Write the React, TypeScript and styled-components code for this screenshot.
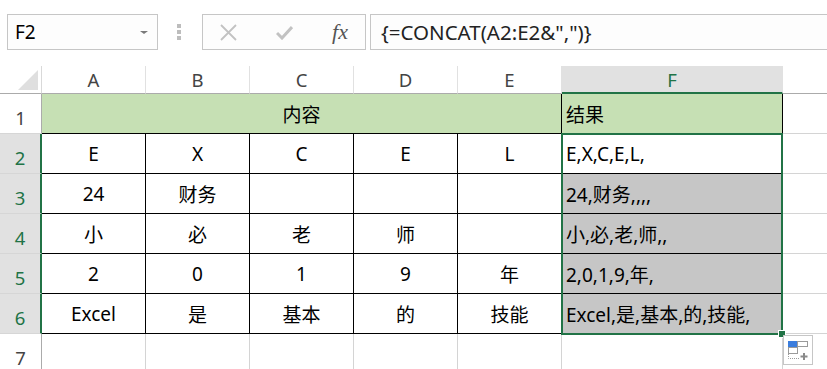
import { Fragment } from 'react';
import styled, { createGlobalStyle } from 'styled-components';

const GlobalStyle = createGlobalStyle`
  html, body {
    margin: 0;
    background: #ffffff;
    font-family: "Noto Sans", "Noto Sans CJK SC", sans-serif;
  }
`;

const green = '#217346';

const Page = styled.div`
  width: 827px;
  height: 369px;
  overflow: hidden;
  background: #ffffff;
`;

const FormulaBar = styled.div`
  display: flex;
  align-items: center;
  height: 36px;
  padding: 14px 0 16px 7px;
`;

const NameBox = styled.div`
  display: flex;
  align-items: center;
  justify-content: space-between;
  box-sizing: border-box;
  width: 151px;
  height: 36px;
  padding: 0 9px 0 7px;
  border: 1px solid #c6c6c6;
  background: #fdfdfd;
  font-size: 19px;
  color: #000;
`;

const DropArrow = styled.span`
  width: 0;
  height: 0;
  border-left: 4px solid transparent;
  border-right: 4px solid transparent;
  border-top: 3px solid #7a7a7a;
`;

const Grip = styled.div`
  display: flex;
  flex-direction: column;
  gap: 2px;
  margin: 0 21px 0 19px;
`;

const Dot = styled.span`
  width: 4px;
  height: 4px;
  background: #bdbdbd;
`;

const FnBox = styled.div`
  display: flex;
  align-items: center;
  justify-content: space-between;
  box-sizing: border-box;
  width: 164px;
  height: 36px;
  padding: 0 17px;
  border: 1px solid #c6c6c6;
  background: #fdfdfd;
`;

const FnIcon = styled.span`
  font-family: "Liberation Serif", serif;
  font-style: italic;
  font-size: 22px;
  color: #555;
`;

const FormulaInput = styled.div`
  display: flex;
  align-items: center;
  box-sizing: border-box;
  flex: 1;
  height: 36px;
  margin-left: 4px;
  padding-left: 10px;
  border: 1px solid #c6c6c6;
  border-right: none;
  background: #fdfdfd;
  font-size: 20.5px;
  color: #222;
`;

const Sheet = styled.div`
  display: grid;
  grid-template-columns: 42px repeat(5, 104px) 221px 1fr;
  grid-template-rows: 28px repeat(7, 40px);
`;

const Corner = styled.div`
  position: relative;
  box-sizing: border-box;
  border-right: 1px solid #d9d9d9;
  border-bottom: 1px solid #ababab;
  background: #fff;

  &::after {
    content: '';
    position: absolute;
    right: 3px;
    bottom: 3px;
    border-left: 20px solid transparent;
    border-bottom: 20px solid #dfdfdf;
  }
`;

const ColHead = styled.div<{ $active?: boolean; $last?: boolean }>`
  display: flex;
  align-items: center;
  justify-content: center;
  box-sizing: border-box;
  font-size: 18.5px;
  color: ${({ $active }) => ($active ? green : '#444')};
  background: ${({ $active }) => ($active ? '#e1e1e1' : '#fff')};
  border-right: ${({ $last }) => ($last ? 'none' : '1px solid #e1e1e1')};
  border-bottom: ${({ $active }) => ($active ? `2px solid ${green}` : '1px solid #ababab')};
`;

const RowHead = styled.div<{ $active?: boolean }>`
  display: flex;
  align-items: flex-end;
  justify-content: center;
  box-sizing: border-box;
  padding-bottom: 3px;
  font-size: 18.5px;
  color: ${({ $active }) => ($active ? green : '#444')};
  background: ${({ $active }) => ($active ? '#e1e1e1' : '#fff')};
  border-right: ${({ $active }) => ($active ? `2px solid ${green}` : '1px solid #ababab')};
  border-bottom: 1px solid #d6d6d6;
`;

const Cell = styled.div<{ $kind?: 'table' | 'grid' | 'edge'; $fill?: string; $left?: boolean; $span?: number }>`
  position: relative;
  display: flex;
  align-items: center;
  justify-content: ${({ $left }) => ($left ? 'flex-start' : 'center')};
  box-sizing: border-box;
  padding-left: ${({ $left }) => ($left ? '4px' : '0')};
  grid-column: ${({ $span }) => ($span ? `span ${$span}` : 'auto')};
  font-size: 19px;
  color: #000;
  white-space: nowrap;
  background: ${({ $fill }) => $fill || '#fff'};
  border-right: ${({ $kind }) =>
    $kind === 'table' ? '1px solid #000' : $kind === 'edge' ? 'none' : '1px solid #d4d4d4'};
  border-bottom: ${({ $kind }) => ($kind === 'table' ? '1px solid #000' : '1px solid #d4d4d4')};
`;

// the selected range F2:F6 is drawn over the cells from the active cell
const Selection = styled.div`
  position: absolute;
  top: -1px;
  left: -1px;
  z-index: 2;
  box-sizing: border-box;
  width: calc(100% + 2px);
  height: 202px;
  border: 2px solid ${green};
  pointer-events: none;
`;

const FillHandle = styled.span`
  position: absolute;
  right: -5px;
  bottom: -5px;
  width: 6px;
  height: 6px;
  background: ${green};
  border: 1px solid #fff;
`;

const QuickAnalysis = styled.div`
  position: absolute;
  top: calc(100% + 2px);
  left: calc(100% + 2px);
  display: flex;
  align-items: center;
  justify-content: center;
  box-sizing: border-box;
  width: 30px;
  height: 30px;
  border: 1px solid #c6c6c6;
  background: #fff;
`;

const rows: string[][] = [
  ['E', 'X', 'C', 'E', 'L', 'E,X,C,E,L,'],
  ['24', '财务', '', '', '', '24,财务,,,,'],
  ['小', '必', '老', '师', '', '小,必,老,师,,'],
  ['2', '0', '1', '9', '年', '2,0,1,9,年,'],
  ['Excel', '是', '基本', '的', '技能', 'Excel,是,基本,的,技能,'],
];

const letters = ['A', 'B', 'C', 'D', 'E', 'F'];

const App = () => (
  <Page>
    <GlobalStyle />
    <FormulaBar>
      <NameBox>
        <span>F2</span>
        <DropArrow />
      </NameBox>
      <Grip>
        <Dot />
        <Dot />
        <Dot />
      </Grip>
      <FnBox>
        <svg width="17" height="17" viewBox="0 0 17 17">
          <path d="M1 1 L16 16 M16 1 L1 16" stroke="#c2c2c2" strokeWidth="1.8" fill="none" />
        </svg>
        <svg width="17" height="15" viewBox="0 0 17 15">
          <path d="M1 8 L6 13 L16 2" stroke="#c2c2c2" strokeWidth="3" fill="none" />
        </svg>
        <FnIcon>fx</FnIcon>
      </FnBox>
      <FormulaInput>{'{=CONCAT(A2:E2&",")}'}</FormulaInput>
    </FormulaBar>

    <Sheet>
      <Corner />
      {letters.map((l) => (
        <ColHead key={l} $active={l === 'F'}>
          {l}
        </ColHead>
      ))}
      <ColHead $last />

      <RowHead>1</RowHead>
      <Cell $kind="table" $span={5} $fill="#c6e0b4">
        内容
      </Cell>
      <Cell $kind="table" $fill="#c6e0b4" $left>
        结果
      </Cell>
      <Cell $kind="edge" />

      {rows.map((r, i) => (
        <Fragment key={i}>
          <RowHead $active>{i + 2}</RowHead>
          {r.map((v, j) => (
            <Cell
              key={j}
              $kind="table"
              $left={j === 5}
              $fill={j === 5 && i > 0 ? '#c6c6c6' : undefined}
            >
              {v}
              {i === 0 && j === 5 && (
                <Selection>
                  <FillHandle />
                  <QuickAnalysis>
                    <svg width="22" height="22" viewBox="0 0 22 22">
                      <rect x="1" y="2" width="9" height="6" fill="#3b7ddd" />
                      <rect x="10.5" y="2.5" width="10" height="5" fill="none" stroke="#9a9a9a" />
                      <rect x="1.5" y="8.5" width="9" height="6" fill="none" stroke="#9a9a9a" />
                      <path d="M1.5 15 V19.5 H12" stroke="#9a9a9a" strokeDasharray="1 1" fill="none" />
                      <path d="M17 14 V21 M13.5 17.5 H20.5" stroke="#8a8a8a" strokeWidth="2" />
                    </svg>
                  </QuickAnalysis>
                </Selection>
              )}
            </Cell>
          ))}
          <Cell $kind="edge" />
        </Fragment>
      ))}

      <RowHead>7</RowHead>
      {letters.map((l) => (
        <Cell key={`r7${l}`} $kind="grid" />
      ))}
      <Cell $kind="edge" />
    </Sheet>
  </Page>
);

export default App;
